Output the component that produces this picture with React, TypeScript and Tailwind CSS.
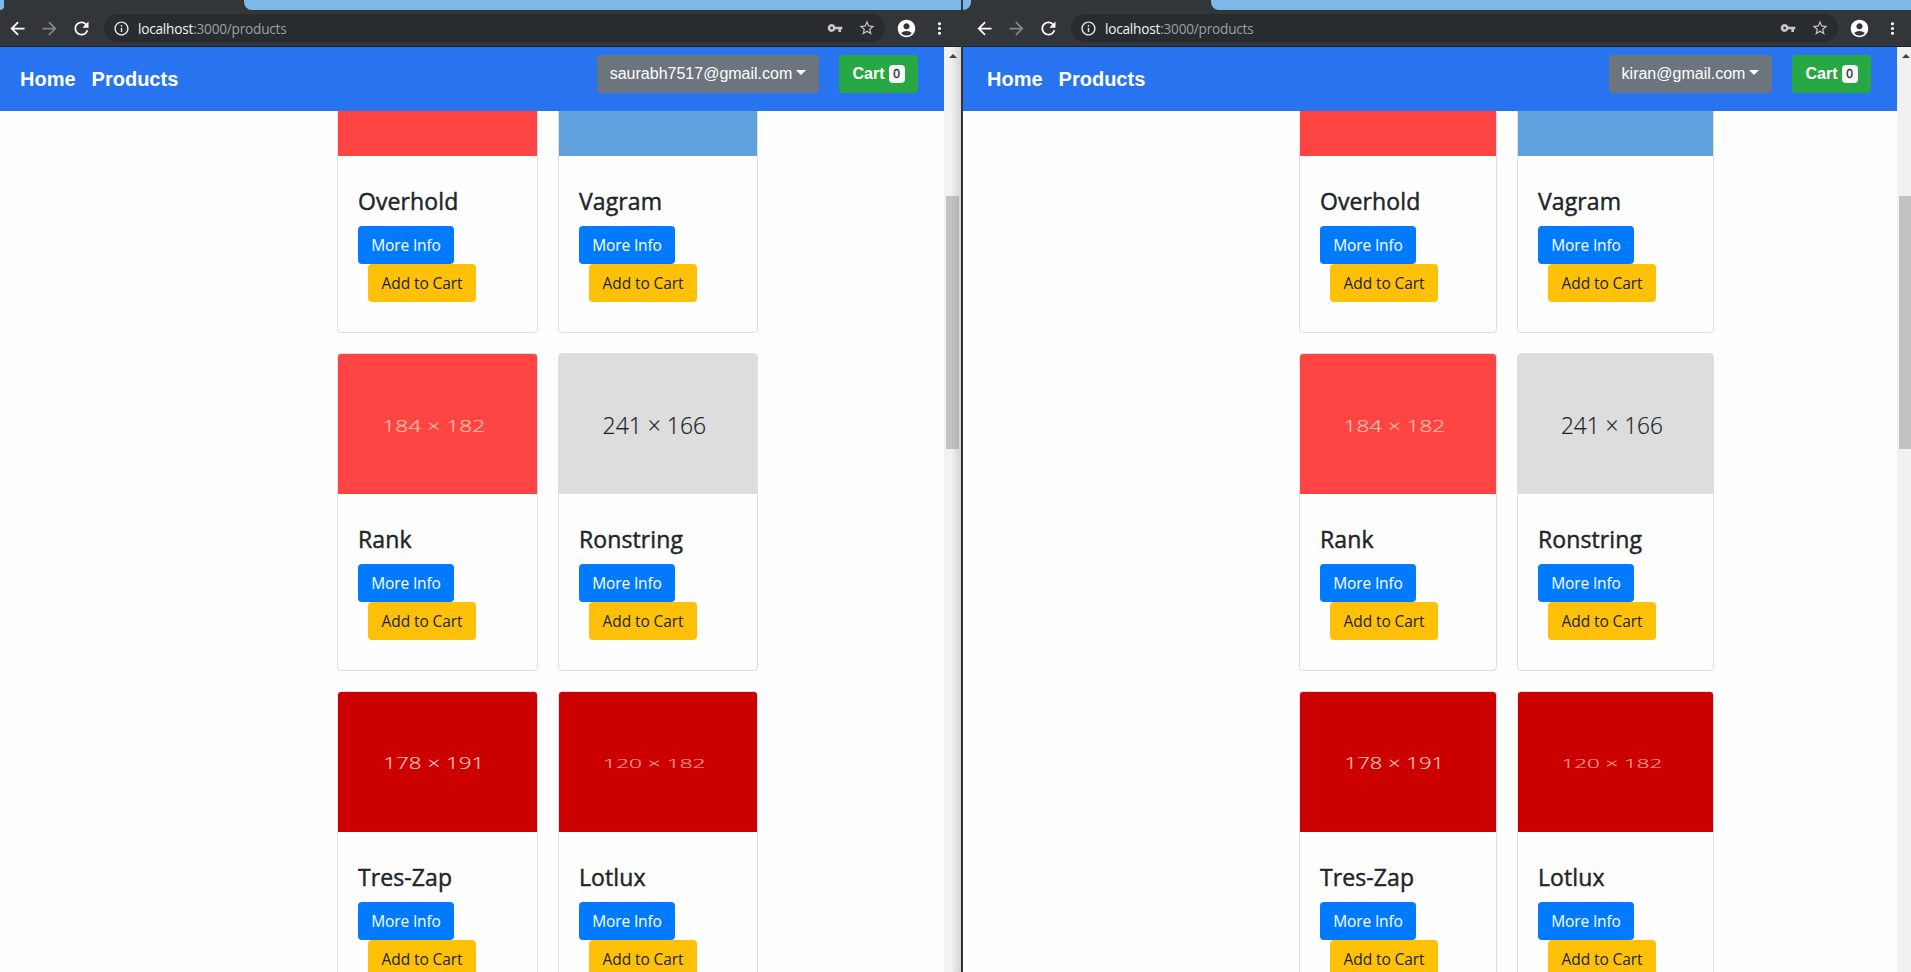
import {
  MdAccountCircle,
  MdArrowBack,
  MdArrowForward,
  MdInfoOutline,
  MdMoreVert,
  MdRefresh,
  MdStarBorder,
  MdVpnKey,
} from "react-icons/md";

type Product = {
  name: string;
  fill: string;
  label?: string;
  ink?: string;
  size?: number;
  textWidth?: number;
};

const products: Product[] = [
  { name: "Overhold", fill: "#ff4444" },
  { name: "Vagram", fill: "#5fa2dd" },
  { name: "Rank", fill: "#ff4444", label: "184 × 182", ink: "#fcc6ae", size: 17, textWidth: 103 },
  { name: "Ronstring", fill: "#dddddd", label: "241 × 166", ink: "#1c2226", size: 23.5, textWidth: 104 },
  { name: "Tres-Zap", fill: "#cc0000", label: "178 × 191", ink: "#f8c8bc", size: 15.5, textWidth: 101 },
  { name: "Lotlux", fill: "#cc0000", label: "120 × 182", ink: "#f09a90", size: 12, textWidth: 103 },
];

function ProductImage({ fill, label, ink, size = 16, textWidth = 100 }: Product) {
  return (
    <svg viewBox="0 0 199 140" preserveAspectRatio="none" className="block h-[140px] w-full rounded-t-[3px]">
      <rect width="199" height="140" fill={fill} />
      {label && (
        <text
          x={95.8 - textWidth / 2}
          y={71.5 + size * 0.357}
          fill={ink}
          stroke={ink}
          strokeWidth="0.2"
          fontSize={size}
          fontWeight="300"
          fontFamily="'Open Sans', 'Noto Sans', sans-serif"
          textLength={textWidth}
          lengthAdjust="spacingAndGlyphs"
        >
          {label}
        </text>
      )}
    </svg>
  );
}

function ProductCard({ product }: { product: Product }) {
  return (
    <article className="h-[318px] rounded border border-[#dfdfdf] bg-[#fefefe]">
      <ProductImage {...product} />
      <div className="px-5 pt-[30px]">
        <h5 className="mb-2 h-8 text-[23px] leading-[31px] tracking-[0.1px] whitespace-nowrap text-[#212529] [-webkit-text-stroke:0.45px_#212529]">
          {product.name}
        </h5>
        <button className="block h-[38px] w-[96px] rounded bg-[#007bff] pt-0.5 text-[15.5px] tracking-[-0.15px] whitespace-nowrap text-white">
          More Info
        </button>
        <button className="ml-2.5 block h-[38px] w-[108px] rounded bg-[#ffc107] pt-0.5 text-[15.5px] tracking-[-0.1px] whitespace-nowrap text-[#212529]">
          Add to Cart
        </button>
      </div>
    </article>
  );
}

function Toolbar({ second }: { second?: boolean }) {
  return (
    <header className="flex h-[47px] shrink-0 flex-col border-b border-[#202325] bg-[#323639]">
      <div className="flex h-2.5 shrink-0">
        <div className={`${second ? "w-2" : "w-1"} rounded-br-lg bg-[#7db9e8]`} />
        <div className="w-60 shrink-0" />
        <div className="flex-1 rounded-bl-lg bg-[#7db9e8]" />
      </div>
      <div className={`flex h-9 items-center pr-3 ${second ? "pl-[11px]" : "pl-[7px]"} text-white`}>
        <MdArrowBack size={21} className="mr-[11px] shrink-0" />
        <MdArrowForward size={21} className="mr-[11px] shrink-0 text-[#8a8480]" />
        <MdRefresh size={21} className="mr-3 shrink-0" />
        <div className="flex h-7 flex-1 items-center rounded-full bg-[#282c2f] pr-[9px] pl-[9px]">
          <MdInfoOutline size={17} className="mr-2 shrink-0 text-[#e8eaed]" />
          <span className="pt-px text-[13.6px] leading-none tracking-[-0.2px] text-[#9aa0a6]">
            <span className="text-[#f1f3f4]">localhost</span>:3000/products
          </span>
          <MdVpnKey size={16} className="mr-[15px] ml-auto shrink-0 text-[#c6c6c6]" />
          <MdStarBorder size={18} className="shrink-0 text-[#c6c6c6]" />
        </div>
        <MdAccountCircle size={21} className="mr-[13px] ml-[11px] shrink-0" />
        <MdMoreVert size={19} className={second ? "-mr-[3px] shrink-0" : "shrink-0"} />
      </div>
    </header>
  );
}

function Navbar({ email, second }: { email: string; second?: boolean }) {
  return (
    <nav
      className={`z-10 flex h-16 shrink-0 items-start bg-[#2873f0] pr-[26px] ${
        second ? "pl-6" : "pl-5"
      } pt-2 font-['Liberation_Sans',Arial,sans-serif] text-base text-white`}
    >
      <a className="mr-4 pt-[9px] text-[20px] leading-[30px] font-bold">Home</a>
      <a className="pt-[9px] text-[20px] leading-[30px] font-bold">Products</a>
      <button
        className={`mr-5 ml-auto flex h-[38px] ${
          second ? "w-[163px]" : "w-[222px]"
        } items-center justify-center rounded bg-[#6c757d] pb-px whitespace-nowrap`}
      >
        {email}
        <span className="mb-[3px] ml-1 border-x-[5px] border-t-[5px] border-x-transparent border-t-white" />
      </button>
      <button className="flex h-[38px] w-[79px] items-center justify-center rounded bg-[#28a745] pb-px font-bold">
        Cart
        <span className="ml-1 flex h-[18px] w-4 items-center justify-center rounded bg-[#f8f9fa] text-xs font-normal text-[#212529] [-webkit-text-stroke:0.3px_#212529]">
          0
        </span>
      </button>
    </nav>
  );
}

function Scrollbar({ second }: { second?: boolean }) {
  return (
    <div
      className={`flex shrink-0 flex-col pl-0.5 ${
        second ? "w-3.5 bg-[#f1f1f1]" : "w-[17px] bg-linear-to-r from-[#f2f2f2] from-40% to-[#d4d4d4] pr-0.5"
      }`}
    >
      <span className="mt-[7px] ml-[3px] h-0 w-0 border-x-4 border-b-4 border-x-transparent border-b-[#404040]" />
      <div
        className={`mt-[138px] h-[253px] ${
          second ? "bg-[#c1c1c1]" : "bg-linear-to-r from-[#c2c2c2] from-40% to-[#b4b4b4]"
        }`}
      />
    </div>
  );
}

function BrowserWindow({ email, second }: { email: string; second?: boolean }) {
  return (
    <section className={`flex h-full flex-col overflow-hidden ${second ? "flex-1" : "w-[961px]"}`}>
      <Toolbar second={second} />
      <div className="flex min-h-0 flex-1">
        <div className="flex min-w-0 flex-1 flex-col">
          <Navbar email={email} second={second} />
          <main className="min-h-0 flex-1 overflow-hidden">
            <div
              className={`-mt-24 grid gap-5 ${
                second ? "ml-[336px] grid-cols-[198px_197px]" : "ml-[337px] grid-cols-[201px_200px]"
              }`}
            >
              {products.map((product) => (
                <ProductCard key={product.name} product={product} />
              ))}
            </div>
          </main>
        </div>
        <Scrollbar second={second} />
      </div>
    </section>
  );
}

export default function App() {
  return (
    <div className="flex h-[972px] w-[1911px] overflow-hidden bg-[#fefefe] font-['Open_Sans','Noto_Sans',sans-serif]">
      <BrowserWindow email="saurabh7517@gmail.com" />
      <div className="w-0.5 shrink-0 bg-[#333537]" />
      <BrowserWindow email="kiran@gmail.com" second />
    </div>
  );
}
